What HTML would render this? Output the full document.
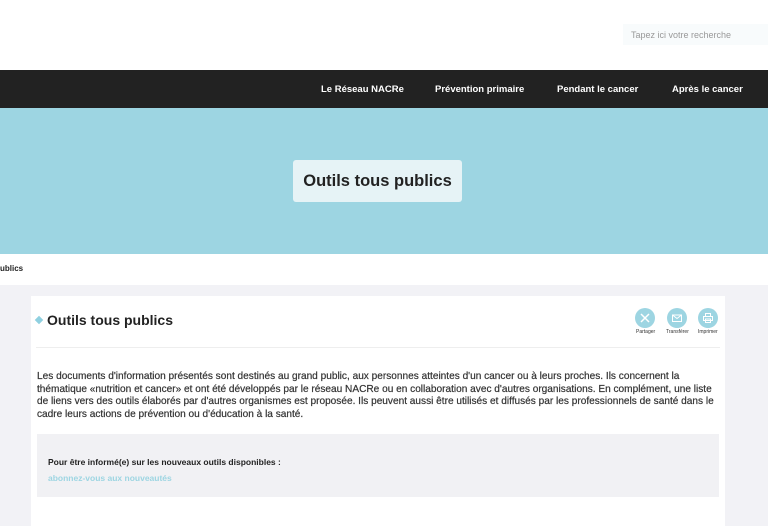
<!DOCTYPE html>
<html><head><meta charset="utf-8"><style>
*{margin:0;padding:0;box-sizing:border-box}
body{width:768px;height:516px;overflow:hidden;background:#f2f2f6;font-family:"Liberation Sans",sans-serif;color:#222;position:relative}
.top{position:absolute;left:0;top:0;width:768px;height:70px;background:#fff}
.search{position:absolute;left:623px;top:24px;width:145px;height:21px;background:#f8fbfc;font-size:9px;color:#999;padding:6px 8px}
.nav{position:absolute;left:0;top:70px;width:768px;height:38px;background:#222;color:#fff;font-size:9.5px;font-weight:bold}
.nav span{position:absolute;top:14px}
.hero{position:absolute;left:0;top:108px;width:768px;height:146px;background:#9dd5e2}
.hbox{position:absolute;left:293px;top:52px;width:169px;height:42px;background:#e6f3f6;border-radius:3px;font-size:16.5px;font-weight:bold;text-align:center;line-height:42px}
.bc{position:absolute;left:0;top:254px;width:768px;height:31px;background:#fff;font-size:8px;font-weight:bold;padding:10px 0 0 0}
.card{position:absolute;left:31px;top:296px;width:694px;height:230px;background:#fff}
h1{position:absolute;left:16px;top:16px;font-size:14px}
.dia{position:absolute;left:5px;top:21px;width:6px;height:6px;background:#8fd0e0;transform:rotate(45deg)}
.hr{position:absolute;left:5px;top:51px;width:684px;height:1px;background:#eee}
.ic{position:absolute;top:12px;width:20px;height:20px;border-radius:50%;background:#9dd5e2}
.ic svg{position:absolute;left:4px;top:4px}
.lb{position:absolute;top:33px;font-size:5px;color:#333}
p{position:absolute;left:6px;top:75px;width:682px;font-size:10.1px;line-height:12.6px;color:#333;-webkit-text-stroke:0.2px #333}
.box{position:absolute;left:6px;top:138px;width:682px;height:63px;background:#f1f1f4;font-size:8.5px;padding:23px 0 0 11px}
.box b{display:block;color:#222;margin-bottom:6px}
.box a{color:#9dd5e2;font-weight:bold}
</style></head><body>
<div class="top"><div class="search">Tapez ici votre recherche</div></div>
<div class="nav"><span style="left:321px">Le Réseau NACRe</span><span style="left:435px">Prévention primaire</span><span style="left:557px">Pendant le cancer</span><span style="left:672px">Après le cancer</span></div>
<div class="hero"><div class="hbox">Outils tous publics</div></div>
<div class="bc">ublics</div>
<div class="card">
<div class="dia"></div><h1>Outils tous publics</h1>
<div class="ic" style="left:604px"><svg width="12" height="12" viewBox="0 0 12 12"><path d="M2 2L10 10M10 2L2 10" stroke="#fff" stroke-width="1.5"/></svg></div><div class="lb" style="left:605px">Partager</div>
<div class="ic" style="left:636px"><svg width="12" height="12" viewBox="0 0 12 12"><rect x="1.5" y="3" width="9" height="6.5" fill="none" stroke="#fff" stroke-width="1"/><path d="M1.5 3L6 6.5L10.5 3" fill="none" stroke="#fff" stroke-width="1"/></svg></div><div class="lb" style="left:635px">Transférer</div>
<div class="ic" style="left:667px"><svg width="12" height="12" viewBox="0 0 12 12"><rect x="3.5" y="1.5" width="5" height="3" fill="none" stroke="#fff"/><rect x="1.5" y="4.5" width="9" height="4" fill="none" stroke="#fff"/><rect x="3.5" y="7" width="5" height="3.5" fill="none" stroke="#fff"/></svg></div><div class="lb" style="left:667px">Imprimer</div>
<div class="hr"></div>
<p>Les documents d'information présentés sont destinés au grand public, aux personnes atteintes d'un cancer ou à leurs proches. Ils concernent la thématique «nutrition et cancer» et ont été développés par le réseau NACRe ou en collaboration avec d'autres organisations. En complément, une liste de liens vers des outils élaborés par d'autres organismes est proposée. Ils peuvent aussi être utilisés et diffusés par les professionnels de santé dans le cadre leurs actions de prévention ou d'éducation à la santé.</p>
<div class="box"><b>Pour être informé(e) sur les nouveaux outils disponibles :</b><a>abonnez-vous aux nouveautés</a></div>
</div>
</body></html>
